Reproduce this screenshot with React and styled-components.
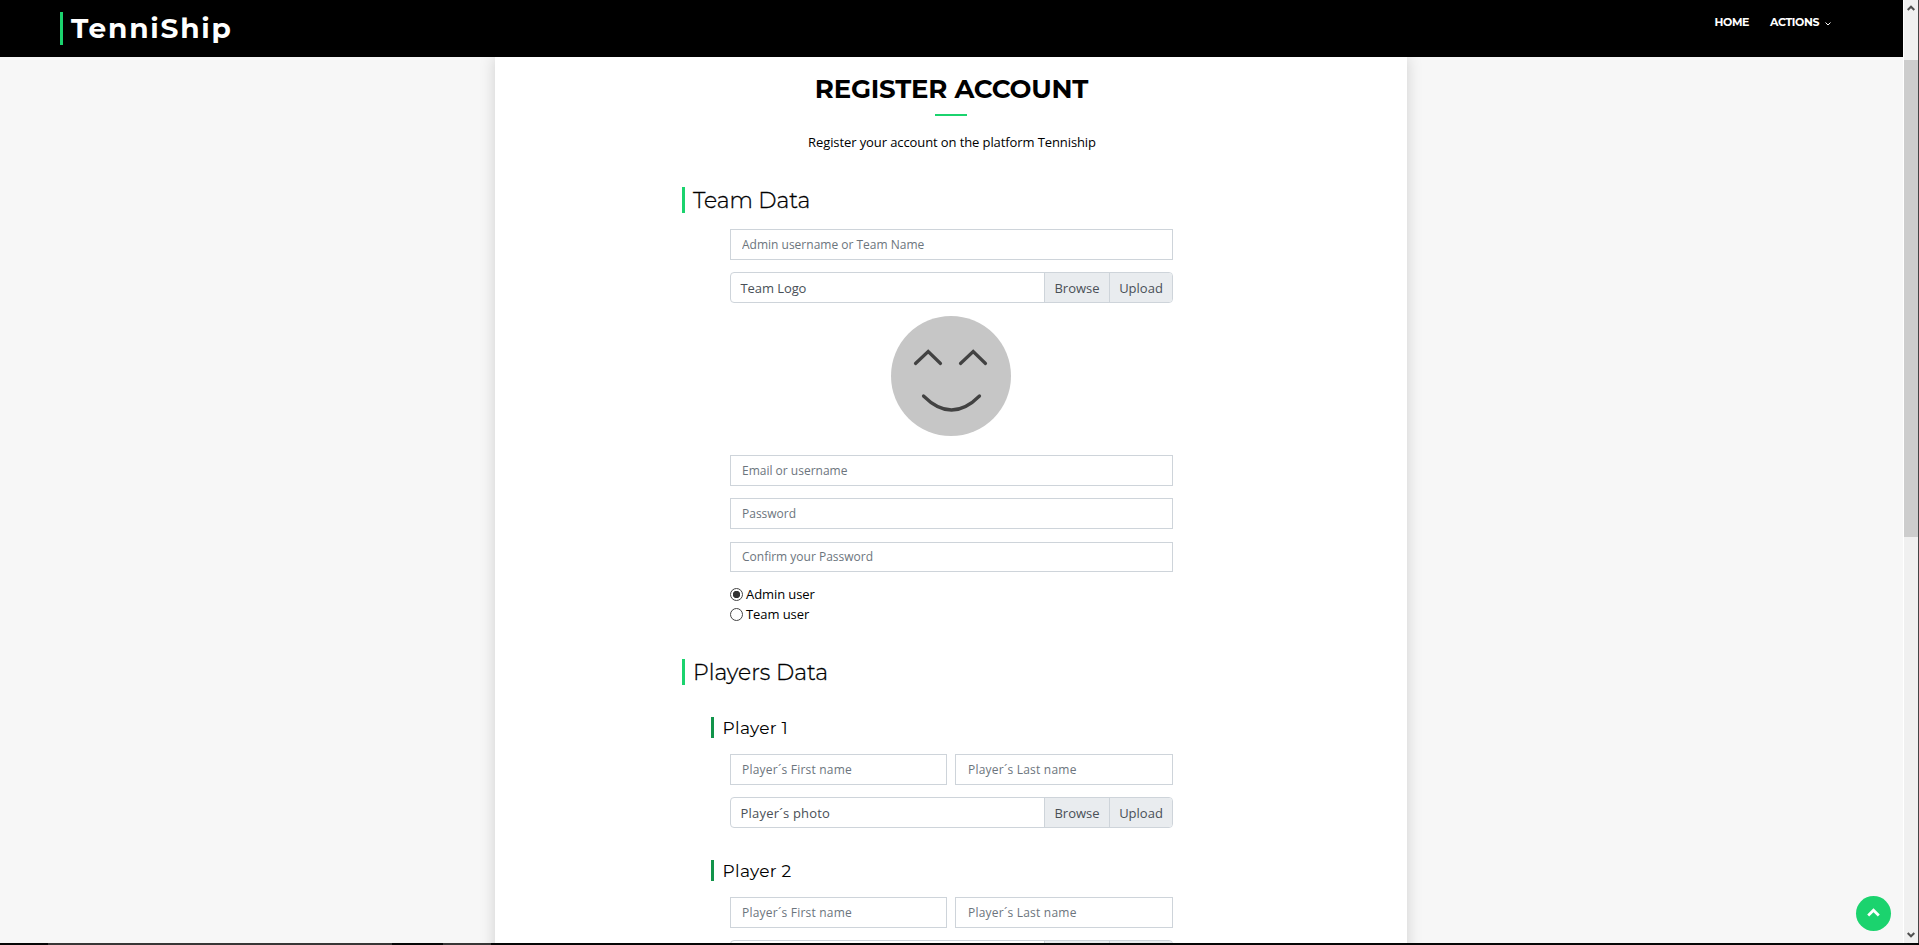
import React from 'react';
import styled, { createGlobalStyle } from 'styled-components';

const GlobalStyle = createGlobalStyle`
  *, *::before, *::after { box-sizing: border-box; }
  html, body { margin: 0; padding: 0; overflow: hidden; }
  body {
    font-family: "Open Sans", sans-serif;
    font-size: 13px;
    line-height: 20px;
    color: #000;
    background: #f7f7f7;
  }
  h1, h2, h3, p { margin: 0; }
`;

const display = '"Montserrat", "Inter", sans-serif';

const Screen = styled.div`
  position: relative;
  display: flex;
  flex-direction: column;
  width: 1919px;
  height: 945px;
  overflow: hidden;
`;

const Viewport = styled.div`
  display: flex;
  flex: 1;
  min-height: 0;
`;

const Page = styled.div`
  display: flex;
  flex-direction: column;
  width: 1903px;
  overflow: hidden;
`;

const Header = styled.header`
  position: relative;
  z-index: 1;
  display: flex;
  justify-content: space-between;
  flex: none;
  height: 57px;
  padding: 12px 72px 0 60px;
  background: #000;
  color: #fff;
`;

const Brand = styled.h1`
  height: 33px;
  padding-left: 8px;
  border-left: 3px solid #1bd36e;
  font: 700 28px/33px ${display};
  letter-spacing: 1.8px;
`;

const Nav = styled.nav`
  display: flex;
  gap: 21px;
  height: 20px;
  font: 700 11px/21px ${display};
  letter-spacing: -0.4px;
`;

const NavItem = styled.a`
  display: flex;
  align-items: center;
  height: 20px;
  svg { margin: 3px 0 0 6px; }
`;

const Card = styled.main`
  display: flex;
  flex-direction: column;
  flex: none;
  width: 912px;
  height: 1200px;
  margin-left: 495px;
  background: #fff;
  box-shadow: 0 0 15px rgba(0, 0, 0, 0.16);
`;

const Title = styled.h2`
  margin-top: 16px;
  padding-left: 1px;
  text-align: center;
  font: 700 26px/32px ${display};
  letter-spacing: -0.2px;
`;

const Underline = styled.div`
  width: 32px;
  height: 2px;
  margin: 9px auto 0 440px;
  background: #1bd36e;
`;

const Intro = styled.p`
  margin-top: 16px;
  padding-left: 2px;
  text-align: center;
  letter-spacing: -0.1px;
`;

const SectionTitle = styled.h2`
  height: 26px;
  margin: ${(p) => p.$top}px 0 16px 187px;
  padding-left: 8px;
  border-left: 3px solid #1bd36e;
  color: #000;
  font: 300 22px/27px ${display};
  -webkit-text-stroke: 0.3px #000;
  letter-spacing: ${(p) => p.$spacing || 0}px;
`;

const PlayerTitle = styled.h3`
  height: 21px;
  margin: ${(p) => p.$top}px 0 16px 216px;
  padding-left: 8.5px;
  border-left: 3px solid #11944a;
  color: #000;
  font: 400 17px/22px ${display};
  letter-spacing: 0.3px;
`;

const Fields = styled.div`
  display: flex;
  flex-direction: column;
  gap: 12px;
  width: 443px;
  margin-left: 235px;
`;

const NameRow = styled.div`
  display: grid;
  grid-template-columns: 217px 218px;
  gap: 8px;
`;

const Input = styled.input`
  width: 100%;
  height: 31px;
  padding: 0 11px 1px;
  border: 1px solid #ced4da;
  border-radius: 0;
  background: #fff;
  color: #495057;
  font: 400 12px/18px "Open Sans", sans-serif;
  outline: none;
  &::placeholder { color: #6c757d; opacity: 1; }
`;

const ConfirmInput = styled(Input)`
  height: 30px;
  margin-top: 1px;
`;

const NameInput = styled(Input)`
  letter-spacing: 0.22px;
  &:last-child { padding-left: 12px; }
`;

const FileGroup = styled.div`
  display: flex;
  height: 31px;
  border: 1px solid #ced4da;
  border-radius: 4px;
  overflow: hidden;
  color: #495057;
  line-height: 31px;
`;

const FileLabel = styled.label`
  flex: 1;
  padding-left: 9.5px;
  letter-spacing: ${(p) => p.$spacing}px;
`;

const FileButton = styled.span`
  width: ${(p) => p.$width}px;
  border-left: 1px solid #ced4da;
  background: #e9ecef;
  text-align: center;
`;

const Avatar = styled.svg`
  display: block;
  margin: 1px 0 7px 161px;
`;

const Radios = styled.div`
  display: flex;
  flex-direction: column;
`;

const RadioLabel = styled.label`
  display: flex;
  align-items: center;
  gap: 3px;
  height: 20px;
  line-height: 20px;
  letter-spacing: -0.08px;
`;

const Radio = styled.input`
  appearance: none;
  width: 13px;
  height: 13px;
  margin: 0;
  border: 1px solid #444;
  border-radius: 50%;
  background: ${(p) => (p.defaultChecked ? 'radial-gradient(circle, #333 3.4px, #fff 4px)' : '#fff')};
`;

const Scrollbar = styled.div`
  display: flex;
  flex-direction: column;
  align-items: center;
  width: 16px;
  border-left: 1px solid #fff;
  border-right: 1px solid #444;
  background: #f0f0f0;
`;

const ScrollArrow = styled.svg`
  flex: none;
  margin-top: ${(p) => p.$top}px;
`;

const Thumb = styled.div`
  flex: none;
  width: 14px;
  height: 477px;
  margin-top: 49px;
  background: #cdcdcd;
`;

const BackToTop = styled.button`
  position: absolute;
  left: 1856px;
  top: 896px;
  display: grid;
  place-items: center;
  width: 35px;
  height: 35px;
  padding: 0 0 3px;
  border: 0;
  border-radius: 50%;
  background: #1bd36e;
`;

const DesktopEdge = styled.div`
  display: flex;
  flex: none;
  height: 2px;
  background: #060606;
`;

const EdgeSegment = styled.div`
  width: ${(p) => p.$width}px;
  margin-left: ${(p) => p.$gap}px;
  background: #383636;
`;

function FilePicker({ label, spacing = 0, blank = false }) {
  return (
    <FileGroup>
      <FileLabel $spacing={spacing}>{blank ? null : label}</FileLabel>
      <FileButton $width={65}>{blank ? null : 'Browse'}</FileButton>
      <FileButton $width={63}>{blank ? null : 'Upload'}</FileButton>
    </FileGroup>
  );
}

function Player({ number, top, blankPicker }) {
  return (
    <>
      <PlayerTitle $top={top}>Player {number}</PlayerTitle>
      <Fields>
        <NameRow>
          <NameInput placeholder="Player´s First name" />
          <NameInput placeholder="Player´s Last name" />
        </NameRow>
        <FilePicker label="Player´s photo" spacing={0.2} blank={blankPicker} />
      </Fields>
    </>
  );
}

export default function App() {
  return (
    <Screen>
      <GlobalStyle />
      <Viewport>
        <Page>
          <Header>
            <Brand>TenniShip</Brand>
            <Nav>
              <NavItem>HOME</NavItem>
              <NavItem>
                ACTIONS
                <svg width="6" height="4" viewBox="0 0 6 4" fill="none" stroke="#fff">
                  <path d="M0.5 0.5 L3 3 L5.5 0.5" />
                </svg>
              </NavItem>
            </Nav>
          </Header>
          <Card>
            <Title>REGISTER ACCOUNT</Title>
            <Underline />
            <Intro>Register your account on the platform Tenniship</Intro>
            <SectionTitle $top={35} $spacing={-0.1}>Team Data</SectionTitle>
            <Fields>
              <Input placeholder="Admin username or Team Name" />
              <FilePicker label="Team Logo" spacing={-0.08} />
              <Avatar width="120" height="120" viewBox="0 0 120 120" fill="none" stroke="#424242" strokeWidth="3.2" strokeLinecap="round">
                <circle cx="60" cy="60" r="60" fill="#c6c6c6" stroke="none" />
                <path d="M24.5 47.5 L37.2 35.5 L49.5 47.5" />
                <path d="M69.5 47.5 L82.2 35.5 L94.5 47.5" />
                <path d="M32.5 80 Q60.5 108 88.5 80" />
              </Avatar>
              <Input placeholder="Email or username" />
              <Input placeholder="Password" />
              <ConfirmInput placeholder="Confirm your Password" />
              <Radios>
                <RadioLabel><Radio type="radio" name="role" defaultChecked />Admin user</RadioLabel>
                <RadioLabel><Radio type="radio" name="role" />Team user</RadioLabel>
              </Radios>
            </Fields>
            <SectionTitle $top={35}>Players Data</SectionTitle>
            <Player number={1} top={16} />
            <Player number={2} top={32} blankPicker />
          </Card>
        </Page>
        <Scrollbar>
          <ScrollArrow $top={5} width="8" height="6" viewBox="0 0 8 6" fill="none" stroke="#505050" strokeWidth="2">
            <path d="M0.7 5 L4 1.7 L7.3 5" />
          </ScrollArrow>
          <Thumb />
          <ScrollArrow $top={395} width="8" height="6" viewBox="0 0 8 6" fill="none" stroke="#505050" strokeWidth="2">
            <path d="M0.7 1 L4 4.3 L7.3 1" />
          </ScrollArrow>
        </Scrollbar>
      </Viewport>
      <DesktopEdge>
        <EdgeSegment $gap={48} $width={344} />
        <EdgeSegment $gap={51} $width={48} />
      </DesktopEdge>
      <BackToTop aria-label="Back to top">
        <svg width="13" height="9" viewBox="0 0 13 9" fill="none" stroke="#fff" strokeWidth="2.8">
          <path d="M1.2 7.4 L6.5 2.2 L11.8 7.4" />
        </svg>
      </BackToTop>
    </Screen>
  );
}
